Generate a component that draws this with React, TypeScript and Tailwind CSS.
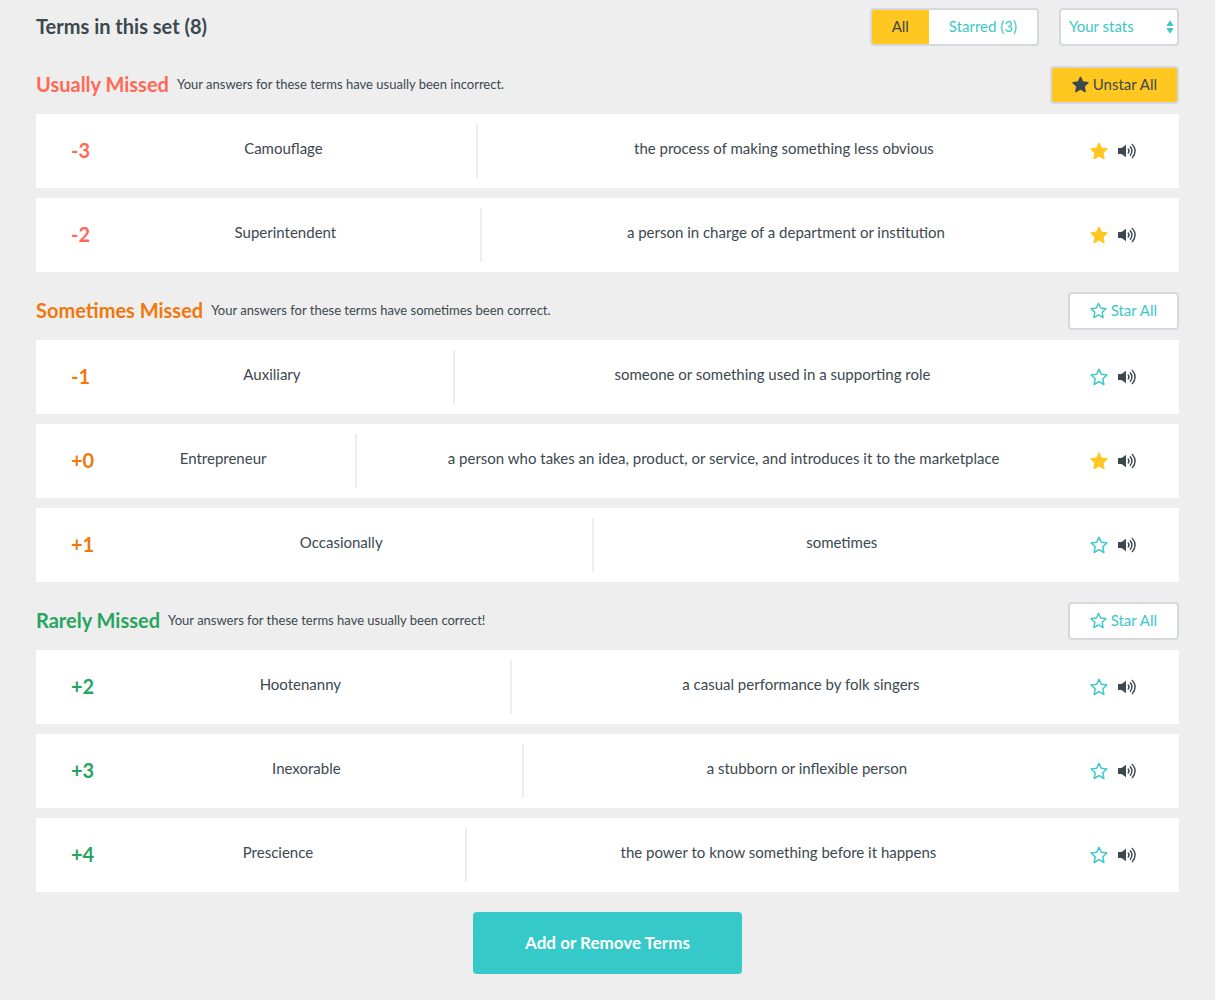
import { useState } from "react";

type Term = { id: string; score: string; word: string; definition: string; share: number };
type Group = { title: string; note: string; color: string; terms: Term[] };

const groups: Group[] = [
  {
    title: "Usually Missed",
    note: "Your answers for these terms have usually been incorrect.",
    color: "text-[#ff6955]",
    terms: [
      { id: "camouflage", score: "-3", word: "Camouflage", definition: "the process of making something less obvious", share: 38.6 },
      { id: "superintendent", score: "-2", word: "Superintendent", definition: "a person in charge of a department or institution", share: 39 },
    ],
  },
  {
    title: "Sometimes Missed",
    note: "Your answers for these terms have sometimes been correct.",
    color: "text-[#f0780a]",
    terms: [
      { id: "auxiliary", score: "-1", word: "Auxiliary", definition: "someone or something used in a supporting role", share: 36.3 },
      { id: "entrepreneur", score: "+0", word: "Entrepreneur", definition: "a person who takes an idea, product, or service, and introduces it to the marketplace", share: 26.5 },
      { id: "occasionally", score: "+1", word: "Occasionally", definition: "sometimes", share: 50.2 },
    ],
  },
  {
    title: "Rarely Missed",
    note: "Your answers for these terms have usually been correct!",
    color: "text-[#27a55f]",
    terms: [
      { id: "hootenanny", score: "+2", word: "Hootenanny", definition: "a casual performance by folk singers", share: 42 },
      { id: "inexorable", score: "+3", word: "Inexorable", definition: "a stubborn or inflexible person", share: 43.2 },
      { id: "prescience", score: "+4", word: "Prescience", definition: "the power to know something before it happens", share: 37.5 },
    ],
  },
];

function Star({ filled, className }: { filled: boolean; className: string }) {
  return (
    <svg viewBox="0 0 18 18" className={className} aria-hidden="true">
      <path
        d="M9 1.4 L11.3 6.3 L16.9 7 L12.8 10.8 L13.9 16.5 L9 13.7 L4.1 16.5 L5.2 10.8 L1.1 7 L6.7 6.3 Z"
        fill={filled ? "currentColor" : "none"}
        stroke="currentColor"
        strokeWidth="1.5"
        strokeLinejoin="round"
      />
    </svg>
  );
}

function Speaker() {
  return (
    <svg viewBox="0 0 20 16" className="h-4 w-5" aria-hidden="true">
      <path d="M1.5 5 H4.6 L9 1.8 V14.2 L4.6 11 H1.5 Q1 11 1 10.5 V5.5 Q1 5 1.5 5 Z" fill="currentColor" />
      <g fill="none" stroke="currentColor" strokeWidth="1.4" strokeLinecap="round">
        <path d="M11.2 6 Q12.8 8 11.2 10" />
        <path d="M13.3 3.7 Q16.6 8 13.3 12.3" />
        <path d="M15.3 1.4 Q20.9 8 15.3 14.6" />
      </g>
    </svg>
  );
}

const buttonBase = "flex h-[38px] items-center rounded border-2 border-[#d5d9de] px-5 pb-0.5 text-[15px]";

export default function App() {
  const [starred, setStarred] = useState<string[]>(["camouflage", "superintendent", "entrepreneur"]);
  const [onlyStarred, setOnlyStarred] = useState(false);

  const toggle = (id: string) =>
    setStarred((s) => (s.includes(id) ? s.filter((x) => x !== id) : [...s, id]));

  const toggleGroup = (group: Group, all: boolean) => {
    const ids = group.terms.map((t) => t.id);
    setStarred((s) => {
      const rest = s.filter((x) => !ids.includes(x));
      return all ? rest : [...rest, ...ids];
    });
  };

  return (
    <main className="min-h-screen bg-[#eeeeee] px-9 pt-2 pb-[26px] font-['Lato',sans-serif] text-[#3c484f]">
      <header className="flex items-center">
        <h1 className="flex-1 pb-0.5 text-[20px] font-bold">Terms in this set (8)</h1>
        <div className="flex h-[38px] overflow-hidden rounded border-2 border-[#d5d9de] bg-white text-[15px]">
          <button
            type="button"
            onClick={() => setOnlyStarred(false)}
            className={onlyStarred ? "px-5 pb-0.5 text-[#3bc8c8]" : "bg-[#ffc71f] px-5 pb-0.5"}
          >
            All
          </button>
          <button
            type="button"
            onClick={() => setOnlyStarred(true)}
            className={onlyStarred ? "bg-[#ffc71f] px-5 pb-0.5" : "px-5 pb-0.5 text-[#3bc8c8]"}
          >
            Starred ({starred.length})
          </button>
        </div>
        <div className="relative ml-5">
          <select
            aria-label="Sort terms"
            className="h-[38px] w-[120px] appearance-none rounded border-2 border-[#d5d9de] bg-white px-2 pb-0.5 text-[15px] text-[#3bc8c8]"
          >
            <option>Your stats</option>
            <option>Original</option>
            <option>Alphabetical</option>
          </select>
          <svg viewBox="0 0 8 14" className="pointer-events-none absolute top-3 right-[5px] h-3.5 w-2 text-[#3bc8c8]" aria-hidden="true">
            <path d="M4 0.3 L7.6 6 H0.4 Z M0.4 8 H7.6 L4 13.7 Z" fill="currentColor" />
          </svg>
        </div>
      </header>

      <div className="mt-5 flex flex-col gap-5">
        {groups.map((group) => {
          const all = group.terms.every((t) => starred.includes(t.id));
          const terms = onlyStarred ? group.terms.filter((t) => starred.includes(t.id)) : group.terms;
          return (
            <section key={group.title} className="flex flex-col gap-2.5">
              <div className="flex items-center gap-2">
                <h2 className={`pb-0.5 text-[20px] font-bold ${group.color}`}>{group.title}</h2>
                <p className="flex-1 text-[13px]">{group.note}</p>
                <button
                  type="button"
                  onClick={() => toggleGroup(group, all)}
                  className={`${buttonBase} ${all ? "bg-[#ffc71f]" : "bg-white text-[#3bc8c8]"}`}
                >
                  <Star filled={all} className="mr-1 h-[17px] w-[17px]" />
                  {all ? "Unstar All" : "Star All"}
                </button>
              </div>
              {terms.map((term) => {
                const on = starred.includes(term.id);
                return (
                  <div key={term.id} className="flex min-h-[74px] items-stretch bg-white py-2.5 pr-[42px] pl-[35px]">
                    <span className={`w-5 self-center pb-0.5 text-[20px] font-bold ${group.color}`}>{term.score}</span>
                    <div
                      className="basis-0 border-r-2 border-[#eeeeee] pt-3 text-center text-[15px] leading-6"
                      style={{ flexGrow: term.share }}
                    >
                      {term.word}
                    </div>
                    <div
                      className="basis-0 pt-3 text-center text-[15px] leading-6"
                      style={{ flexGrow: 100 - term.share }}
                    >
                      {term.definition}
                    </div>
                    <div className="flex shrink-0 items-center gap-[9px]">
                      <button
                        type="button"
                        aria-label={`Star ${term.word}`}
                        aria-pressed={on}
                        onClick={() => toggle(term.id)}
                        className={on ? "text-[#ffc71f]" : "text-[#3bc8c8]"}
                      >
                        <Star filled={on} className="h-[18px] w-[18px]" />
                      </button>
                      <button type="button" aria-label={`Listen to ${term.word}`}>
                        <Speaker />
                      </button>
                    </div>
                  </div>
                );
              })}
            </section>
          );
        })}
      </div>

      <div className="mt-5 flex justify-center">
        <button type="button" className="h-[62px] rounded bg-[#35c9c9] px-[52px] text-[17px] font-bold text-white">
          Add or Remove Terms
        </button>
      </div>
    </main>
  );
}
